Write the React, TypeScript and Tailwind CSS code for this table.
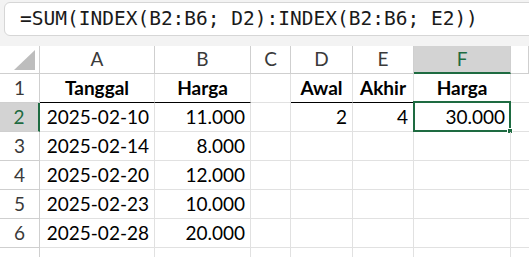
import React from 'react';

const letters = ['A', 'B', 'C', 'D', 'E', 'F', ''];

// row data: [A, B, C, D, E, F]
const rows: string[][] = [
  ['Tanggal', 'Harga', '', 'Awal', 'Akhir', 'Harga'],
  ['2025-02-10', '11.000', '', '2', '4', '30.000'],
  ['2025-02-14', '8.000', '', '', '', ''],
  ['2025-02-20', '12.000', '', '', '', ''],
  ['2025-02-23', '10.000', '', '', '', ''],
  ['2025-02-28', '20.000', '', '', '', ''],
  ['', '', '', '', '', ''],
];

const App = () => {
  return (
    <div
      className="w-[529px] h-[257px] overflow-hidden bg-[#f3f3f3] text-black"
      style={{ fontFamily: 'Lato, "Open Sans", sans-serif' }}
    >
      {/* Formula bar */}
      <div className="h-[46px] pt-[2px] pl-[4px]">
        <div className="h-[34px] -mr-2 rounded-[6px] border border-[#d6d6d6] bg-white flex items-center pl-[15px]">
          <span className="text-[19.5px] text-[#1a1a1a] whitespace-nowrap" style={{ fontFamily: '"DejaVu Sans Mono", "Liberation Mono", monospace' }}>
            =SUM(INDEX(B2:B6; D2):INDEX(B2:B6; E2))
          </span>
        </div>
      </div>

      {/* Sheet */}
      <div className="grid grid-cols-[40px_115px_96px_40px_62px_61px_97px_1fr] grid-rows-[28px_repeat(7,29px)] bg-white text-[19px]">
        {/* corner */}
        <div className="relative border-r border-b border-[#cfcfcf] bg-white">
          <svg className="absolute right-[4px] bottom-[3px]" width="21" height="20" viewBox="0 0 21 20">
            <polygon points="21,0 21,20 0,20" fill="#bdbdbd" />
          </svg>
        </div>
        {letters.map((l, i) => (
          <div
            key={i}
            className={
              l === 'F'
                ? 'flex items-center justify-center bg-[#d3d3d3] text-[#1e6b41] border-r border-[#cfcfcf] border-b-2 border-b-[#1e6b41]'
                : 'flex items-center justify-center text-[#3a3a3a] border-r border-b border-[#cfcfcf]'
            }
          >
            {l}
          </div>
        ))}

        {rows.map((r, ri) => {
          const selRow = ri === 1;
          return (
            <React.Fragment key={ri}>
              <div
                className={
                  selRow
                    ? 'flex items-center justify-center bg-[#d3d3d3] text-[#1e6b41] border-b border-[#cfcfcf] border-r-2 border-r-[#1e6b41]'
                    : 'flex items-center justify-center text-[#3a3a3a] border-r border-b border-[#cfcfcf]'
                }
              >
                {ri < 6 ? ri + 1 : ''}
              </div>
              {r.map((v, ci) => {
                const isHead = ri === 0;
                const underline = isHead && ci !== 2;
                const selected = ri === 1 && ci === 5;
                return (
                  <div
                    key={ci}
                    className={
                      'relative flex items-center px-[5px] whitespace-nowrap border-r border-[#e1e1e1] ' +
                      (underline ? 'border-b border-b-black ' : 'border-b ') +
                      (isHead ? 'justify-center font-bold' : 'justify-end')
                    }
                  >
                    {v}
                    {selected && (
                      <div className="absolute -left-px -top-[2px] -right-px -bottom-px border-2 border-[#1e6b41]">
                        <div className="absolute -right-[4px] -bottom-[4px] w-[6px] h-[6px] bg-[#1e6b41] border border-white" />
                      </div>
                    )}
                  </div>
                );
              })}
              <div className="border-b border-[#e1e1e1]" />
            </React.Fragment>
          );
        })}
      </div>
    </div>
  );
};

export default App;
